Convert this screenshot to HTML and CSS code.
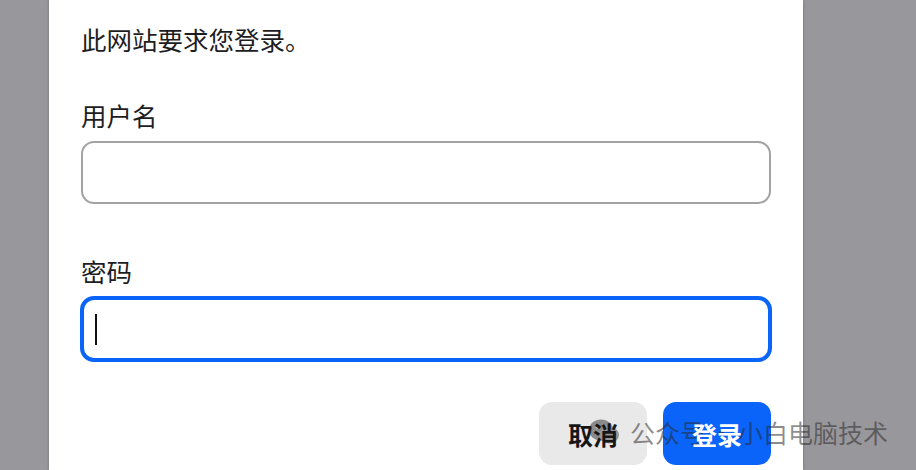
FILE: index.html
```html
<!DOCTYPE html>
<html lang="zh">
<head>
<meta charset="utf-8">
<link rel="stylesheet" href="styles.css">
</head>
<body>
<div class="stage">
  <div class="dialog">
    <p class="intro">此网站要求您登录。</p>
    <label class="label">用户名</label>
    <div class="field"></div>
    <label class="label label-pw">密码</label>
    <div class="field field-focus"><span class="caret"></span></div>
    <div class="actions">
      <button class="btn btn-cancel"><span class="btn-label">取消</span></button>
      <button class="btn btn-ok"><span class="btn-label">登录</span></button>
    </div>
  </div>
</div>
<div class="watermark">
  <svg class="wm-icon" width="32" height="28" viewBox="0 0 32 28">
    <ellipse cx="13" cy="12" rx="12" ry="10.5" fill="#8a8a8a"/>
    <ellipse cx="21" cy="17" rx="10" ry="8.5" fill="#969696"/>
    <circle cx="9" cy="9" r="1.6" fill="#d0d0d0"/>
    <circle cx="16" cy="9" r="1.6" fill="#d0d0d0"/>
  </svg>
  <span class="wm-text">公众号<span class="wm-dot">·</span>小白电脑技术</span>
</div>
</body>
</html>
```

FILE: styles.css
```css
html, body {
  margin: 0;
  padding: 0;
}
body {
  width: 916px;
  height: 470px;
  overflow: hidden;
  background: #98979c;
  font-family: "Noto Sans CJK SC", "Noto Sans", sans-serif;
  position: relative;
}
.stage {
  padding-left: 49px;
  height: 470px;
}
.dialog {
  width: 754px;
  height: 470px;
  background: #ffffff;
  box-sizing: border-box;
  padding: 22px 32px 0 32px;
  box-shadow: 0 0 3px rgba(0, 0, 0, 0.25);
  display: flex;
  flex-direction: column;
}
.intro {
  margin: 0;
  font-size: 25.5px;
  line-height: 34px;
  color: #1d1d1f;
}
.label {
  display: block;
  margin-top: 42px;
  font-size: 25.5px;
  line-height: 34px;
  color: #1d1d1f;
}
.label-pw {
  margin-top: 50px;
}
.field {
  margin-top: 9px;
  width: 690px;
  height: 63px;
  flex-shrink: 0;
  box-sizing: border-box;
  border: 2px solid #a3a3a3;
  border-radius: 13px;
  background: #fff;
}
.field-focus {
  width: 692px;
  height: 66px;
  margin-left: -1px;
  margin-top: 8px;
  border: 4px solid #0a64f8;
  border-radius: 14px;
  display: flex;
  align-items: center;
  padding-left: 11px;
}
.caret {
  display: block;
  width: 2px;
  height: 31px;
  background: #111;
}
.actions {
  margin-top: 40px;
  width: 690px;
  display: flex;
  justify-content: flex-end;
  gap: 16px;
  flex-shrink: 0;
}
.btn {
  width: 108px;
  height: 63px;
  border: none;
  border-radius: 13px;
  font-family: "Noto Sans CJK SC", "Noto Sans", sans-serif;
  font-size: 25px;
  font-weight: 700;
  padding: 0;
}
.btn-label {
  position: relative;
  z-index: 2;
}
.btn-cancel {
  background: #e9e9ea;
  color: #161616;
}
.btn-ok {
  background: #0a64f9;
  color: #ffffff;
}
.watermark {
  position: absolute;
  z-index: 1;
  left: 588px;
  top: 416px;
  display: flex;
  align-items: center;
  gap: 10px;
  pointer-events: none;
}
.wm-text {
  font-size: 25px;
  line-height: 32px;
  color: rgba(40, 40, 40, 0.53);
  white-space: nowrap;
}
.wm-dot {
  margin: 0 4px;
}
```
